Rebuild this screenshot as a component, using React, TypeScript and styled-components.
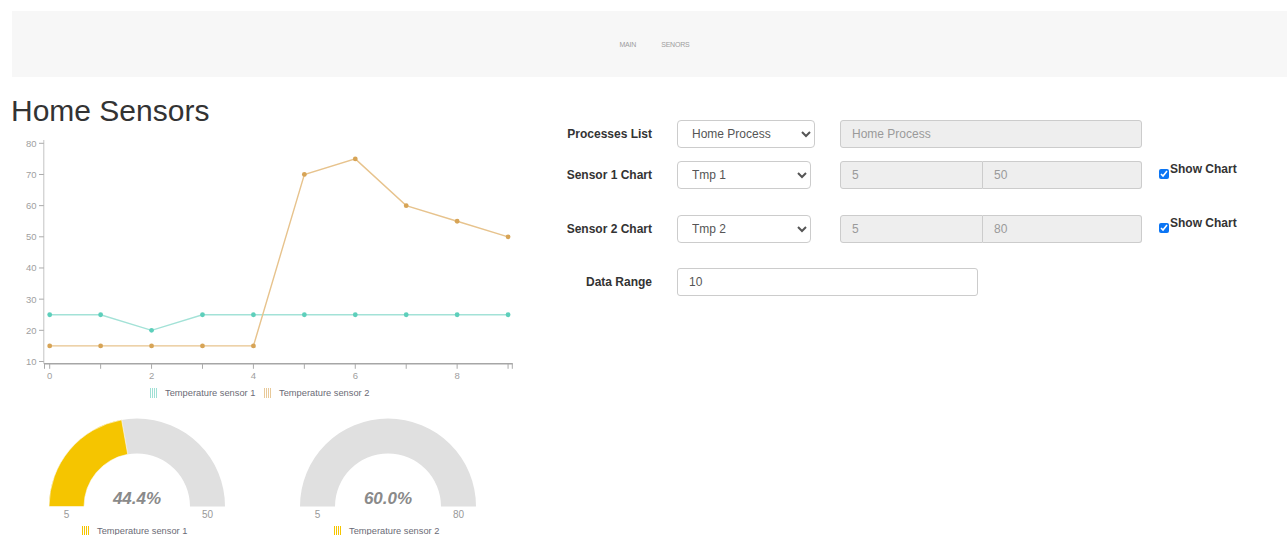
import React from "react";
import styled, { createGlobalStyle } from "styled-components";

const GlobalStyle = createGlobalStyle`
  body {
    margin: 0;
    background: #fff;
    font-family: "Liberation Sans", Arial, sans-serif;
    color: #333;
  }
`;

const Navbar = styled.nav`
  margin: 11px 0 0 12px;
  height: 66px;
  background: #f7f7f7;
  display: flex;
  align-items: center;
  justify-content: center;
  gap: 25px;
  padding-left: 10px;
`;

const NavLink = styled.a`
  font-size: 7px;
  letter-spacing: -0.2px;
  color: #9d9d9d;
  text-decoration: none;
  text-transform: uppercase;
`;

const Main = styled.div`
  display: grid;
  grid-template-columns: 545px 1fr;
`;

const LeftColumn = styled.div`
  display: flex;
  flex-direction: column;
`;

const Title = styled.h1`
  margin: 17px 0 8px;
  padding-left: 11px;
  font-size: 30px;
  line-height: 33px;
  font-weight: 400;
  color: #333;
`;

const ChartSvg = styled.svg`
  display: block;
  font-family: "Liberation Sans", Arial, sans-serif;
`;

const Legend = styled.div<{ $offset: number; $small?: boolean }>`
  display: flex;
  align-items: center;
  padding-left: ${(p) => p.$offset}px;
  height: ${(p) => (p.$small ? 14 : 18)}px;
`;

const LegendItem = styled.div<{ $w?: number }>`
  display: flex;
  align-items: center;
  gap: 7px;
  width: ${(p) => (p.$w ? `${p.$w}px` : "auto")};
  font-size: 9.3px;
  color: #6b6b76;
  white-space: nowrap;
`;

const Swatch = styled.span<{ $color: string }>`
  display: block;
  flex: none;
  width: 8px;
  height: 10px;
  background: repeating-linear-gradient(
    to right,
    ${(p) => p.$color} 0 1px,
    transparent 1px 2px
  );
`;

const GaugeRow = styled.div`
  display: flex;
  gap: 51px;
  padding-left: 37px;
`;

const GaugeBlock = styled.div`
  width: 200px;
  display: flex;
  flex-direction: column;
`;

const RightColumn = styled.div`
  padding-top: 43px;
  display: flex;
  flex-direction: column;
`;

const FormRow = styled.div<{ $mb: number; $top?: boolean }>`
  display: flex;
  align-items: ${(p) => (p.$top ? "flex-start" : "center")};
  margin-bottom: ${(p) => p.$mb}px;
`;

const Label = styled.label`
  width: 107px;
  text-align: right;
  font-size: 12px;
  font-weight: 700;
  color: #333;
  align-self: center;
`;

const Select = styled.select<{ $w: number }>`
  margin-left: 25px;
  width: ${(p) => p.$w}px;
  height: 28px;
  padding: 0 6px 0 10px;
  font-family: "Liberation Sans", Arial, sans-serif;
  font-size: 12px;
  color: #555;
  background: #fff;
  border: 1px solid #ccc;
  border-radius: 4px;
  box-sizing: border-box;
`;

const TextInput = styled.input<{ $w: number; $ml: number }>`
  margin-left: ${(p) => p.$ml}px;
  width: ${(p) => p.$w}px;
  height: 28px;
  padding: 0 11px;
  box-sizing: border-box;
  font-family: "Liberation Sans", Arial, sans-serif;
  font-size: 12px;
  color: #555;
  background: #fff;
  border: 1px solid #ccc;
  border-radius: 3px;
  outline: none;

  &:disabled {
    background: #eee;
    color: #9a9a9a;
  }
`;

const InputGroup = styled.div`
  margin-left: 29px;
  width: 302px;
  display: flex;
`;

const GroupInput = styled.input<{ $w: number; $first?: boolean }>`
  width: ${(p) => p.$w}px;
  height: 28px;
  padding: 0 11px;
  box-sizing: border-box;
  font-family: "Liberation Sans", Arial, sans-serif;
  font-size: 12px;
  background: #eee;
  color: #9a9a9a;
  border: 1px solid #ccc;
  border-left-width: ${(p) => (p.$first ? 1 : 0)}px;
  border-radius: ${(p) => (p.$first ? "3px 0 0 3px" : "0 3px 3px 0")};
`;

const CheckLabel = styled.label`
  margin-left: 17px;
  display: flex;
  align-items: flex-start;
  font-size: 12px;
  font-weight: 700;
  color: #333;
  line-height: 14px;
  padding-top: 1px;
`;

const Check = styled.input`
  width: 10px;
  height: 10px;
  margin: 7px 1px 0 0;
  accent-color: #0b75f4;
`;

// ---- chart data ----
const sensor1 = [25, 25, 20, 25, 25, 25, 25, 25, 25, 25];
const sensor2 = [15, 15, 15, 15, 15, 70, 75, 60, 55, 50];

const TOP = 135;
const xOf = (i: number) => 49.7 + i * 50.93;
const yOf = (v: number) => 143.3 + (80 - v) * 3.117 - TOP;
const AXIS_Y = 363.8 - TOP;

const LineChart: React.FC = () => {
  const series = [
    { data: sensor1, line: "#a3e2d7", dot: "#5dcfbb" },
    { data: sensor2, line: "#e7c38d", dot: "#d7a456" },
  ];
  return (
    <ChartSvg width="530" height="249">
      {/* y axis */}
      <line x1="43.8" y1="5" x2="43.8" y2={AXIS_Y} stroke="#c4c4c4" />
      {[80, 70, 60, 50, 40, 30, 20, 10].map((v) => (
        <g key={v}>
          <line x1="39" y1={yOf(v)} x2="43.8" y2={yOf(v)} stroke="#aaa" />
          <text x="36.5" y={yOf(v) + 3.4} fontSize="9.5" fill="#a0a0a0" textAnchor="end">
            {v}
          </text>
        </g>
      ))}
      {/* x axis */}
      <line x1="44" y1={AXIS_Y} x2="512.8" y2={AXIS_Y} stroke="#a6a6a6" strokeWidth="1.6" />
      <line x1="44.5" y1={AXIS_Y} x2="44.5" y2={AXIS_Y + 5} stroke="#aaa" />
      <line x1="512.3" y1={AXIS_Y} x2="512.3" y2={AXIS_Y + 5} stroke="#aaa" />
      {sensor1.map((_, i) => (
        <g key={i}>
          <line x1={xOf(i)} y1={AXIS_Y} x2={xOf(i)} y2={AXIS_Y + 5} stroke="#aaa" />
          {i % 2 === 0 && (
            <text x={xOf(i)} y={AXIS_Y + 15.5} fontSize="9.5" fill="#a0a0a0" textAnchor="middle">
              {i}
            </text>
          )}
        </g>
      ))}
      {series.map((s, k) => (
        <g key={k}>
          <polyline
            points={s.data.map((v, i) => `${xOf(i)},${yOf(v)}`).join(" ")}
            fill="none"
            stroke={s.line}
            strokeWidth="1.4"
          />
          {s.data.map((v, i) => (
            <circle key={i} cx={xOf(i)} cy={yOf(v)} r="2.4" fill={s.dot} />
          ))}
        </g>
      ))}
    </ChartSvg>
  );
};

interface GaugeProps {
  min: number;
  max: number;
  fill: number;
  percent: string;
  label: string;
  legendOffset: number;
}

const CX = 100;
const CY = 104.5;
const R = 88;
const RI = 53;

const arcPath = (from: number, to: number) => {
  // angles in radians, measured from the left end (0) to the right end (PI)
  const p = (r: number, a: number) => [CX - r * Math.cos(a), CY - r * Math.sin(a)];
  const [x1, y1] = p(R, from);
  const [x2, y2] = p(R, to);
  const [x3, y3] = p(RI, to);
  const [x4, y4] = p(RI, from);
  return `M${x1},${y1} A${R},${R} 0 0 1 ${x2},${y2} L${x3},${y3} A${RI},${RI} 0 0 0 ${x4},${y4} Z`;
};

const Gauge: React.FC<GaugeProps> = ({ min, max, fill, percent, label, legendOffset }) => (
  <GaugeBlock>
    <ChartSvg width="200" height="122">
      <path d={arcPath(0, Math.PI)} fill="#e0e0e0" />
      {fill > 0 && <path d={arcPath(0, Math.PI * fill)} fill="#f5c500" stroke="#fff" strokeWidth="0.6" />}
      <text
        x={CX}
        y={CY - 2.5}
        fontSize="17"
        fontWeight="700"
        fontStyle="italic"
        fill="#8a8a8a"
        textAnchor="middle"
      >
        {percent}
      </text>
      <text x={CX - (R + RI) / 2} y={CY + 11.5} fontSize="10" fill="#999" textAnchor="middle">
        {min}
      </text>
      <text x={CX + (R + RI) / 2} y={CY + 11.5} fontSize="10" fill="#999" textAnchor="middle">
        {max}
      </text>
    </ChartSvg>
    <Legend $offset={legendOffset} $small>
      <LegendItem>
        <Swatch $color="#f5c500" />
        {label}
      </LegendItem>
    </Legend>
  </GaugeBlock>
);

const App: React.FC = () => {
  return (
    <>
      <GlobalStyle />
      <Navbar>
        <NavLink href="#">Main</NavLink>
        <NavLink href="#">Senors</NavLink>
      </Navbar>
      <Main>
        <LeftColumn>
          <Title>Home Sensors</Title>
          <LineChart />
          <Legend $offset={150}>
            <LegendItem $w={114}>
              <Swatch $color="#9fe0d5" />
              Temperature sensor 1
            </LegendItem>
            <LegendItem>
              <Swatch $color="#e8c999" />
              Temperature sensor 2
            </LegendItem>
          </Legend>
          <GaugeRow>
            <Gauge
              min={5}
              max={50}
              fill={0.444}
              percent="44.4%"
              label="Temperature sensor 1"
              legendOffset={45}
            />
            <Gauge
              min={5}
              max={80}
              fill={0}
              percent="60.0%"
              label="Temperature sensor 2"
              legendOffset={46}
            />
          </GaugeRow>
        </LeftColumn>

        <RightColumn>
          <FormRow $mb={13}>
            <Label>Processes List</Label>
            <Select $w={138} defaultValue="home">
              <option value="home">Home Process</option>
            </Select>
            <TextInput $w={302} $ml={25} disabled value="Home Process" readOnly />
          </FormRow>

          <FormRow $mb={26} $top>
            <Label>Sensor 1 Chart</Label>
            <Select $w={134} defaultValue="tmp1">
              <option value="tmp1">Tmp 1</option>
              <option value="tmp2">Tmp 2</option>
            </Select>
            <InputGroup>
              <GroupInput $w={143} $first disabled value="5" readOnly />
              <GroupInput $w={159} disabled value="50" readOnly />
            </InputGroup>
            <CheckLabel>
              <Check type="checkbox" defaultChecked />
              Show Chart
            </CheckLabel>
          </FormRow>

          <FormRow $mb={25} $top>
            <Label>Sensor 2 Chart</Label>
            <Select $w={134} defaultValue="tmp2">
              <option value="tmp1">Tmp 1</option>
              <option value="tmp2">Tmp 2</option>
            </Select>
            <InputGroup>
              <GroupInput $w={143} $first disabled value="5" readOnly />
              <GroupInput $w={159} disabled value="80" readOnly />
            </InputGroup>
            <CheckLabel>
              <Check type="checkbox" defaultChecked />
              Show Chart
            </CheckLabel>
          </FormRow>

          <FormRow $mb={0}>
            <Label>Data Range</Label>
            <TextInput $w={301} $ml={25} defaultValue="10" />
          </FormRow>
        </RightColumn>
      </Main>
    </>
  );
};

export default App;
